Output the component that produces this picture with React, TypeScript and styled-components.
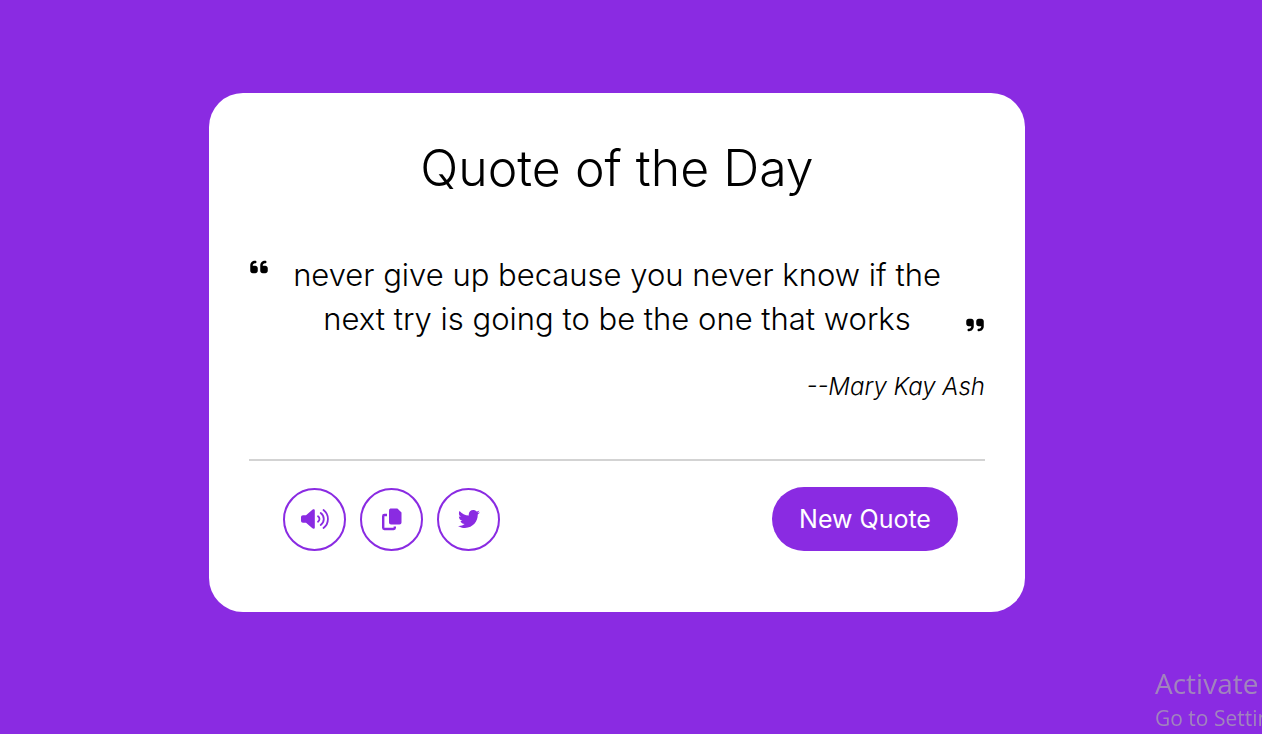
import React from 'react';
import styled, { createGlobalStyle } from 'styled-components';
import { FaQuoteLeft, FaQuoteRight, FaTwitter } from 'react-icons/fa6';

const violet = '#8a2be2';

const GlobalStyle = createGlobalStyle`
  *, *::before, *::after { box-sizing: border-box; }
  body {
    margin: 0;
    background: ${violet};
    color: #000;
    font-family: Inter, "Liberation Sans", sans-serif;
    font-weight: 300;
  }
`;

const Page = styled.div`
  min-height: 100vh;
  padding: 24px 28px 53px 0;
  display: flex;
  align-items: center;
  justify-content: center;
  overflow: hidden;
`;

const Card = styled.main`
  width: 100%;
  max-width: 816px;
  padding: 39px 40px 61px;
  border-radius: 34px;
  background: #fff;
`;

const Title = styled.h1`
  margin: 0;
  font-size: 50px;
  line-height: 72px;
  font-weight: 300;
  text-align: center;
`;

const QuoteRow = styled.div`
  display: flex;
  justify-content: space-between;
  margin-top: 49px;
`;

const QuoteMark = styled.span<{ $end?: boolean }>`
  display: flex;
  flex: none;
  align-items: ${(p) => (p.$end ? 'flex-end' : 'flex-start')};
  padding: 4px 0 6px;
  font-size: 20px;
`;

const QuoteText = styled.blockquote`
  flex: 1;
  margin: 0 24px;
  font-size: 31px;
  line-height: 44px;
  text-align: center;
`;

const Author = styled.p`
  margin: 28px 0 0;
  font-size: 24px;
  line-height: 36px;
  font-style: italic;
  text-align: right;
`;

const Footer = styled.footer`
  display: flex;
  align-items: center;
  justify-content: space-between;
  margin-top: 54px;
  padding: 26px 27px 0 34px;
  border-top: 2px solid #d3d3d3;
`;

const Actions = styled.div`
  display: flex;
  gap: 14px;
`;

const IconButton = styled.button`
  display: flex;
  align-items: center;
  justify-content: center;
  width: 63px;
  height: 63px;
  padding: 0;
  border: 2px solid ${violet};
  border-radius: 50%;
  background: transparent;
  color: ${violet};
  font-size: 22px;
  cursor: pointer;
`;

const NewQuoteButton = styled.button`
  width: 186px;
  height: 64px;
  padding: 0;
  border: 0;
  border-radius: 32px;
  background: ${violet};
  color: #fff;
  font: 400 25px Inter, "Liberation Sans", sans-serif;
  cursor: pointer;
`;

const Watermark = styled.aside`
  position: fixed;
  right: 0;
  bottom: 0;
  width: 107px;
  overflow: hidden;
  white-space: nowrap;
  color: #a184bd;
  font-family: "Open Sans", "Noto Sans", sans-serif;
  font-weight: 400;
  pointer-events: none;
`;

const WatermarkTitle = styled.div`
  font-size: 28px;
  line-height: 38px;
`;

const WatermarkText = styled.div`
  font-size: 21px;
  line-height: 32px;
`;

const VolumeIcon = () => (
  <svg width="28" height="22" viewBox="0 0 28 22" fill="none" aria-hidden="true">
    <path
      d="M2 7.2H5L11.4 1.7C12.5 .8 13.8 1.2 13.8 2.6V19.4C13.8 20.8 12.5 21.2 11.4 20.3L5 14.8H2C.8 14.8 0 14 0 12.8V9.2C0 8 .8 7.2 2 7.2Z"
      fill="currentColor"
    />
    <path
      d="M17 8.3C19 9.8 19 12.2 17 13.7M19.7 5C23.8 8 23.8 14 19.7 17M22.5 2C28.4 6.4 28.4 15.6 22.5 20"
      stroke="currentColor"
      strokeWidth="1.8"
      strokeLinecap="round"
    />
  </svg>
);

const CopyIcon = () => (
  <svg width="20" height="23" viewBox="0 0 20 23" fill="none" aria-hidden="true">
    <path
      d="M9 .5H15.4L19.5 4.6V14.5C19.5 15.6 18.6 16.5 17.5 16.5H9C7.9 16.5 7 15.6 7 14.5V2.5C7 1.4 7.9 .5 9 .5Z"
      fill="currentColor"
    />
    <path
      d="M5 7H2.4C1.7 7 1.2 7.5 1.2 8.2V19.8C1.2 20.5 1.7 21 2.4 21H11.6C12.3 21 12.8 20.5 12.8 19.8V18.5"
      stroke="currentColor"
      strokeWidth="2.4"
    />
  </svg>
);

export default function App() {
  return (
    <>
      <GlobalStyle />
      <Page>
        <Card>
          <Title>Quote of the Day</Title>
          <QuoteRow>
            <QuoteMark><FaQuoteLeft /></QuoteMark>
            <QuoteText>
              never give up because you never know if the next try is going to be the one that works
            </QuoteText>
            <QuoteMark $end><FaQuoteRight /></QuoteMark>
          </QuoteRow>
          <Author>--Mary Kay Ash</Author>
          <Footer>
            <Actions>
              <IconButton type="button" aria-label="Read aloud"><VolumeIcon /></IconButton>
              <IconButton type="button" aria-label="Copy quote"><CopyIcon /></IconButton>
              <IconButton type="button" aria-label="Share on Twitter"><FaTwitter /></IconButton>
            </Actions>
            <NewQuoteButton type="button">New Quote</NewQuoteButton>
          </Footer>
        </Card>
      </Page>
      <Watermark>
        <WatermarkTitle>Activate</WatermarkTitle>
        <WatermarkText>Go to Settin</WatermarkText>
      </Watermark>
    </>
  );
}
